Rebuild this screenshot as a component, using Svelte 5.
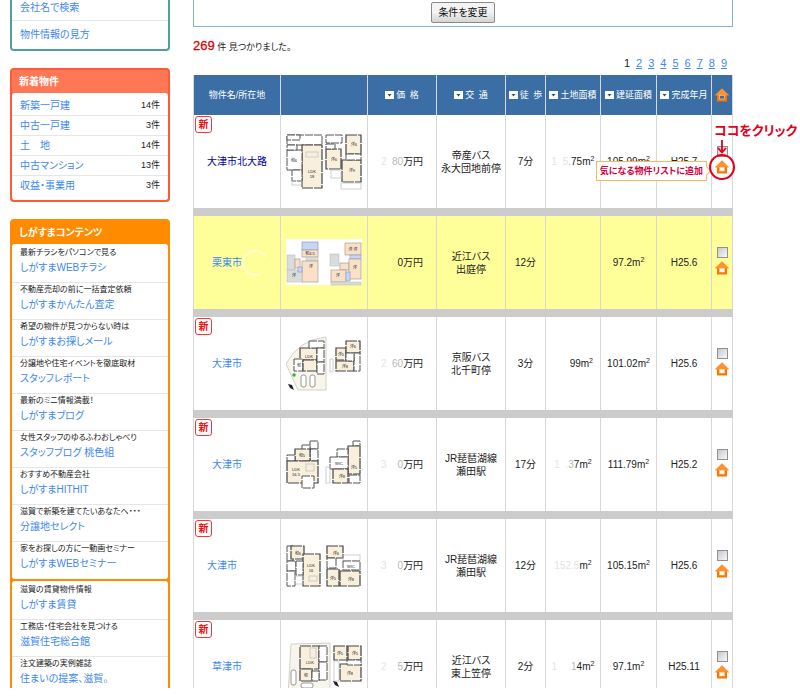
<script lang="ts">
  // ── 間取り図: [x, y, 幅, 高さ, 種類] ─────────────────────────────────────
  type Kind = 'room' | 'plain' | 'light' | 'peach' | 'blue' | 'gray' | 'car'
  type Shape = [number, number, number, number, Kind]

  interface Plan {
    site?: string
    paper?: boolean
    shapes: Shape[]
    labels: [number, number, string][]
    compass?: [number, number]
    tree?: [number, number]
  }

  interface Estate {
    id: number
    isNew: boolean
    name: string
    visited?: boolean
    smudge?: boolean
    price: [string, string, string]
    access: [string, string]
    walk: string
    land: [string, string, string]
    floor: string
    built: string
    plan: Plan
  }

  const searchLinks = ['会社名で検索', '物件情報の見方']

  const newItems = [
    { label: '新築一戸建', count: 14 },
    { label: '中古一戸建', count: 3 },
    { label: '土　地', count: 14 },
    { label: '中古マンション', count: 13 },
    { label: '収益・事業用', count: 3 },
  ]

  const contentGroups = [
    [
      { note: '最新チラシをパソコンで見る', label: 'しがすまWEBチラシ' },
      { note: '不動産売却の前に一括査定依頼', label: 'しがすまかんたん査定' },
      { note: '希望の物件が見つからない時は', label: 'しがすまお探しメール' },
      { note: '分譲地や住宅イベントを徹底取材', label: 'スタッフレポート' },
      { note: '最新のミニ情報満載！', label: 'しがすまブログ' },
      { note: '女性スタッフのゆるふわおしゃべり', label: 'スタッフブログ 桃色組' },
      { note: 'おすすめ不動産会社', label: 'しがすまHITHIT' },
      { note: '滋賀で新築を建てたいあなたへ・・・', label: '分譲地セレクト' },
      { note: '家をお探しの方に一動画セミナー', label: 'しがすまWEBセミナー' },
    ],
    [
      { note: '滋賀の賃貸物件情報', label: 'しがすま賃貸' },
      { note: '工務店・住宅会社を見つける', label: '滋賀住宅総合館' },
      { note: '注文建築の実例雑誌', label: '住まいの提案、滋賀。' },
    ],
  ]

  const sortHeads = ['価\u2002格', '交\u2002通', '徒\u2002歩', '土地面積', '建延面積', '完成年月']
  const colWidths = [88, 87, 69, 69, 40, 55, 56, 55, 21]
  const pages = [2, 3, 4, 5, 6, 7, 8, 9]

  const estates: Estate[] = [
    {
      id: 1, isNew: true, name: '大津市北大路', visited: true,
      price: ['2\u2007', '80', '万円'], access: ['帝産バス', '永大団地前停'], walk: '7分',
      land: ['1\u20075', '.', '75'], floor: '105.99', built: 'H25.7',
      plan: {
        shapes: [
          [1, 1, 35, 10, 'plain'], [1, 1, 13, 5, 'plain'], [16, 11, 20, 43, 'room'], [1, 16, 15, 20, 'plain'],
          [1, 11, 10, 5, 'plain'], [20, 18, 12, 5, 'light'], [6, 36, 10, 11, 'plain'], [6, 47, 10, 4, 'light'],
          [40, 1, 16, 8, 'plain'], [60, 1, 15, 19, 'room'], [40, 15, 15, 20, 'room'], [40, 10, 9, 5, 'plain'],
          [56, 26, 19, 22, 'room'], [60, 20, 15, 6, 'plain'], [45, 36, 10, 8, 'light'], [55, 49, 20, 6, 'light'],
        ],
        labels: [[8, 28, '和6'], [26, 39, 'LDK'], [26, 44, '18'], [68, 12, '洋6'], [48, 27, '洋6'], [66, 38, '洋9']],
      },
    },
    {
      id: 2, isNew: false, name: '栗東市', smudge: true,
      price: ['', '', '\u2007\u2007\u20070万円'], access: ['近江バス', '出庭停'], walk: '12分',
      land: ['', '', ''], floor: '97.2', built: 'H25.6',
      plan: {
        paper: true,
        shapes: [
          [16, 7, 16, 8, 'blue'], [16, 15, 16, 7, 'peach'], [20, 22, 12, 4, 'gray'], [16, 26, 16, 21, 'peach'],
          [1, 20, 8, 15, 'gray'], [9, 24, 5, 9, 'peach'], [1, 35, 15, 12, 'gray'], [12, 32, 4, 5, 'blue'],
          [59, 8, 16, 12, 'peach'], [64, 20, 11, 4, 'blue'], [44, 19, 9, 12, 'gray'], [54, 28, 9, 7, 'peach'],
          [45, 35, 15, 12, 'peach'], [63, 24, 12, 20, 'peach'], [60, 37, 4, 9, 'blue'], [45, 47, 30, 3, 'gray'],
        ],
        labels: [[24, 20, '和4.5'], [25, 33, '洋'], [8, 42, '洋'], [67, 16, '洋 洋'], [52, 42, '洋'], [69, 34, '洋']],
      },
    },
    {
      id: 3, isNew: true, name: '大津市　　',
      price: ['2\u2007', '60', '万円'], access: ['京阪バス', '北千町停'], walk: '3分',
      land: ['\u2007\u2007\u2007', '', '99'], floor: '101.02', built: 'H25.6',
      plan: {
        site: 'M40 1 Q12 4 0 28 L12 54 H40 Z',
        shapes: [
          [14, 12, 17, 12, 'room'], [23, 5, 15, 7, 'plain'], [8, 23, 9, 12, 'plain'], [17, 24, 14, 11, 'room'],
          [31, 12, 7, 14, 'plain'], [31, 26, 7, 12, 'plain'], [15, 39, 5, 12, 'car'], [24, 39, 5, 12, 'car'],
          [50, 12, 10, 12, 'room'], [60, 5, 14, 12, 'room'], [50, 25, 18, 10, 'room'], [68, 17, 6, 18, 'plain'],
          [60, 17, 8, 8, 'plain'], [44, 23, 3, 13, 'light'],
        ],
        labels: [[23, 22, 'LDK'], [13, 31, '和'], [55, 20, '洋5'], [67, 12, '洋6'], [59, 32, '洋8']],
        compass: [5, 51], tree: [8, 39],
      },
    },
    {
      id: 4, isNew: true, name: '大津市　　',
      price: ['3\u2007', '\u20070', '万円'], access: ['JR琵琶湖線', '瀬田駅'], walk: '17分',
      land: ['1\u2007.', '3', '7'], floor: '111.79', built: 'H25.2',
      plan: {
        shapes: [
          [24, 4, 8, 8, 'plain'], [24, 12, 8, 12, 'plain'], [16, 8, 8, 5, 'plain'], [9, 12, 15, 12, 'room'],
          [1, 18, 8, 6, 'plain'], [1, 24, 31, 22, 'room'], [20, 27, 8, 7, 'light'], [16, 39, 12, 12, 'plain'],
          [67, 4, 7, 5, 'plain'], [62, 9, 12, 28, 'room'], [51, 12, 11, 8, 'plain'], [44, 20, 18, 12, 'plain'],
          [47, 32, 15, 14, 'room'], [63, 38, 11, 8, 'plain'], [40, 30, 4, 16, 'light'],
        ],
        labels: [[16, 20, '和5'], [10, 34, 'LDK'], [10, 39, '16.5'], [56, 41, '洋8'], [53, 28, 'WIC'], [68, 32, '洋5']],
      },
    },
    {
      id: 5, isNew: true, name: '大津市　　　',
      price: ['3\u2007', '\u20070', '万円'], access: ['JR琵琶湖線', '瀬田駅'], walk: '12分',
      land: ['152.5', '', ''], floor: '105.15', built: 'H25.6',
      plan: {
        shapes: [
          [1, 8, 6, 15, 'plain'], [5, 8, 13, 13, 'room'], [17, 16, 17, 32, 'room'], [1, 23, 9, 10, 'plain'],
          [10, 23, 7, 14, 'plain'], [1, 33, 8, 15, 'plain'], [9, 38, 8, 8, 'light'], [23, 38, 8, 5, 'light'],
          [41, 8, 16, 12, 'room'], [57, 17, 17, 6, 'light'], [57, 23, 17, 9, 'plain'], [41, 20, 9, 10, 'plain'],
          [41, 31, 12, 17, 'room'], [54, 33, 20, 15, 'room'],
        ],
        labels: [[12, 17, '和6'], [25, 29, 'LDK'], [25, 34, '16'], [50, 17, '洋6'], [65, 30, 'WIC'], [47, 42, '洋5'], [65, 43, '洋8']],
      },
    },
    {
      id: 6, isNew: true, name: '草津市　　',
      price: ['2\u2007', '\u20075', '万円'], access: ['近江バス', '東上笠停'], walk: '2分',
      land: ['1\u2007\u2007.', '1', '4'], floor: '97.1', built: 'H25.11',
      plan: {
        site: 'M5 5 L44 4 V56 H2 Z',
        shapes: [
          [14, 7, 19, 23, 'room'], [24, 9, 6, 10, 'light'], [33, 7, 8, 16, 'plain'], [33, 23, 8, 18, 'plain'],
          [14, 30, 12, 12, 'room'], [26, 32, 7, 10, 'plain'], [5, 31, 5, 15, 'car'], [15, 44, 12, 5, 'car'],
          [48, 7, 13, 14, 'room'], [62, 7, 13, 14, 'room'], [54, 25, 21, 17, 'room'], [61, 21, 14, 5, 'plain'],
          [48, 22, 5, 20, 'light'],
        ],
        labels: [[24, 25, 'LDK'], [20, 38, '和'], [54, 16, '洋5'], [69, 16, '洋5'], [64, 36, '洋8']],
        compass: [50, 45],
      },
    },
  ]

  let checked = $state<Record<number, boolean>>({})
</script>

{#snippet house(big: boolean)}
  <svg class="house" class:big viewBox="0 0 14 14" aria-hidden="true">
    <path d="M7 0.5 L14 7.2 H12 V13.5 H2 V7.2 H0 Z" fill="#ff7400" />
    <path d="M7 0.5 L14 7.2 H0 Z" fill="#ff9230" />
    <rect x="4.6" y="7.4" width="4.8" height="3.6" fill={big ? '#3b6ea5' : '#fff'} stroke="#ffd9a8" stroke-width="0.6" />
  </svg>
{/snippet}

{#snippet floorPlan(plan: Plan)}
  <svg class="plan" viewBox="0 0 76 56" role="img" aria-label="間取り図">
    {#if plan.paper}
      <rect x="0" y="4" width="76" height="46" fill="#fff" />
    {/if}
    {#if plan.site}
      <path d={plan.site} fill="#f8f5ec" stroke="#c4c0b4" stroke-width="0.7" />
    {/if}
    {#each plan.shapes as [x, y, w, h, kind]}
      <rect class={kind} {x} {y} width={w} height={h} rx={kind === 'car' ? 2 : 0} />
    {/each}
    {#each plan.labels as [x, y, text]}
      <text {x} {y}>{text}</text>
    {/each}
    {#if plan.tree}
      <circle cx={plan.tree[0]} cy={plan.tree[1]} r="1.8" fill="#35b04a" />
    {/if}
    {#if plan.compass}
      <path d="M-3 -3 L1 -2 L3 3 L-1 1 Z" transform="translate({plan.compass[0]} {plan.compass[1]})" fill="#222" />
    {/if}
  </svg>
{/snippet}

<div class="page">
  <aside>
    <section class="box search">
      <ul>
        {#each searchLinks as link}
          <li><a href="#search">{link}</a></li>
        {/each}
      </ul>
    </section>

    <section class="box arrivals">
      <h2>新着物件</h2>
      <ul>
        {#each newItems as item}
          <li><a href="#new">{item.label}</a><span>{item.count}件</span></li>
        {/each}
      </ul>
    </section>

    <section class="box contents">
      <h2>しがすまコンテンツ</h2>
      {#each contentGroups as group}
        <ul>
          {#each group as item}
            <li>
              <p>{item.note}</p>
              <a href="#contents">{item.label}</a>
            </li>
          {/each}
        </ul>
      {/each}
    </section>
  </aside>

  <main>
    <div class="conditions">
      <button type="button">条件を変更</button>
    </div>

    <p class="result"><strong>269</strong> 件 見つかりました。</p>

    <nav class="pager">
      <span>1</span>
      {#each pages as page}
        <a href="#page{page}">{page}</a>
      {/each}
    </nav>

    <table>
      <colgroup>
        {#each colWidths as w}
          <col style="width: {w}px" />
        {/each}
      </colgroup>
      <thead>
        <tr>
          <th>物件名/所在地</th>
          <th></th>
          {#each sortHeads as head}
            <th>
              <button type="button" class="sort">
                <svg viewBox="0 0 9 8" aria-hidden="true">
                  <rect width="9" height="8" fill="#fff" />
                  <path d="M2.5 3 H6.5 L4.5 5.5 Z" fill="#1d4f86" />
                </svg>{head}
              </button>
            </th>
          {/each}
          <th>{@render house(true)}</th>
        </tr>
      </thead>
      <tbody>
        {#each estates as estate, i}
          {#if i > 0}
            <tr class="gap"><td colspan="9"></td></tr>
          {/if}
          <tr class:marked={!estate.isNew}>
            <td class="name">
              {#if estate.isNew}<span class="new">新</span>{/if}
              <a href="#estate{estate.id}" class:visited={estate.visited}>{estate.name}</a>{#if estate.smudge}<svg class="smudge" viewBox="0 0 26 26" aria-hidden="true">
                <circle cx="13" cy="13" r="12" fill="none" stroke="#ffffd2" stroke-width="2" stroke-dasharray="56 20" transform="rotate(60 13 13)" />
              </svg>{/if}
            </td>
            <td>{@render floorPlan(estate.plan)}</td>
            <td><span class="faint">{estate.price[0]}</span><span class="dim">{estate.price[1]}</span>{estate.price[2]}</td>
            <td>{estate.access[0]}<br />{estate.access[1]}</td>
            <td>{estate.walk}</td>
            <td>
              {#if estate.land.join('')}
                <span class="faint">{estate.land[0]}</span><span class="dim">{estate.land[1]}</span>{estate.land[2]}m<sup>2</sup>
              {/if}
            </td>
            <td>{estate.floor}m<sup>2</sup></td>
            <td>{estate.built}</td>
            <td class="pick">
              <label>
                <input type="checkbox" bind:checked={checked[estate.id]} aria-label="{estate.name.trim()}を選択" />
                {@render house(false)}
              </label>
              {#if i === 0}
                <div class="guide">
                  <strong>ココをクリック</strong>
                  <svg class="arrow" viewBox="0 0 10 14" aria-hidden="true">
                    <path d="M5 0 V12 M1 8 L5 12.5 L9 8" fill="none" stroke="#e2001a" stroke-width="1.8" />
                  </svg>
                  <span class="ring"></span>
                </div>
                <div class="tip">気になる物件リストに追加</div>
              {/if}
            </td>
          </tr>
        {/each}
      </tbody>
    </table>
  </main>
</div>

<style>
  :global(body) { margin: 0; background: #fff; }

  .page {
    display: flex; align-items: flex-start; gap: 23px; box-sizing: border-box;
    height: calc(100vh - 10px); overflow: hidden; padding: 0 67px 0 10px;
    font: 10px/13px "Liberation Sans", "Noto Sans CJK JP", sans-serif;
    font-feature-settings: "palt"; color: #222;
  }
  a { color: #4088f0; text-decoration: none; }
  ul { list-style: none; margin: 0; padding: 0; }
  p, h2 { margin: 0; }

  /* ── サイドバー ── */
  aside { flex: 0 0 160px; display: flex; flex-direction: column; gap: 17px; }
  .box { border: 2px solid; border-radius: 4px; }
  .box h2 { padding: 0 7px; font-size: 10px; line-height: 23px; color: #fff; }
  .box ul { background: #fff; border-radius: 3px; }
  .box li { border-bottom: 1px solid #e6e6e6; padding: 0 8px; }
  .box li:last-child { border-bottom: 0; }

  .search { border-color: #4f9f9b; border-top: 0; border-radius: 0 0 4px 4px; }
  .search li { line-height: 27px; }
  .search li:first-child { line-height: 13px; padding-bottom: 6px; }
  .search ul { padding: 1px 0; }

  .arrivals { border-color: #ff5a36; background: #ff7755; }
  .arrivals ul { padding: 3px 0 5px; }
  .arrivals li { display: flex; justify-content: space-between; line-height: 19px; }
  .arrivals span { font-size: 9px; }

  .contents { border-color: #ff8c00; background: #ff8c00; }
  .contents ul { padding: 2px 0 1px; }
  .contents ul + ul { margin-top: 2px; }
  .contents li { padding-bottom: 6px; white-space: nowrap; }
  .contents p { font-size: 8px; line-height: 14px; }
  .contents a { display: block; line-height: 16px; }

  /* ── 検索結果 ── */
  main { flex: 1; min-width: 0; }
  .conditions {
    display: flex; justify-content: center; padding: 2px 0 3px;
    border: 1px solid #86aed6; border-top: 0;
  }
  .conditions button {
    width: 64px; height: 21px; padding: 0; border: 1px solid #8a8a8a; border-radius: 2px;
    background: linear-gradient(#f4f4f4 45%, #d4d4d4); font: inherit; color: #111;
  }
  .result { margin-top: 10px; font-size: 9px; line-height: 18px; }
  .result strong { font-size: 13px; font-weight: 400; color: #d00; -webkit-text-stroke: 0.3px #d00; }
  .pager {
    display: flex; justify-content: flex-end; gap: 6px; margin-bottom: 4px;
    padding-right: 6px; font-size: 11px; line-height: 15px;
  }
  .pager a { text-decoration: underline; }

  table { width: 100%; table-layout: fixed; border-collapse: separate; border-spacing: 0; }
  th, td { box-sizing: border-box; padding: 0; border-right: 1px solid #d8d8d8; text-align: center; vertical-align: middle; white-space: nowrap; }
  th:first-child, td:first-child { border-left: 1px solid #d8d8d8; }
  th { height: 40px; background: #3a6ea5; font-size: 9px; font-weight: 400; color: #fff; }
  td { height: 93px; }
  .gap td { height: 8px; background: #ccc; border-color: #ccc; }
  .marked td { background: #ffff99; }

  .sort {
    display: flex; align-items: center; justify-content: center; gap: 2px; width: 100%;
    padding: 0; border: 0; background: none; font: inherit; color: inherit; white-space: nowrap;
    font-feature-settings: inherit;
  }
  .sort svg { flex: none; width: 9px; height: 8px; }

  .name { position: relative; }
  .name a { white-space: pre; }
  a.visited { color: #000099; }
  .new {
    position: absolute; top: 1px; left: 1px; box-sizing: border-box; width: 17px; height: 17px;
    border: 1px solid #f33; border-radius: 3px; line-height: 15px; font-weight: 700; color: #e11;
  }
  .smudge { width: 26px; height: 26px; margin-right: -6px; vertical-align: middle; }
  .faint { color: #e4e4e4; }
  .dim { color: #b8b8b8; }
  sup { font-size: 7px; line-height: 0; vertical-align: 4px; }

  .plan { display: block; width: 76px; height: 56px; margin: 0 auto; }
  .plan rect { stroke-width: 1; }
  .plan text { font-size: 4px; text-anchor: middle; fill: #222; }
  .plan .room { fill: #f8f0dc; stroke: #444; stroke-width: 1.2; stroke-dasharray: 11 1; }
  .plan .plain { fill: #fff; stroke: #555; stroke-dasharray: 8 1; }
  .plan .light { fill: none; stroke: #bbb; stroke-width: 0.7; }
  .plan .peach { fill: #fbe0c8; stroke: #a89c9c; stroke-width: 0.7; }
  .plan .blue { fill: #c8d6f6; stroke: #8f9cc4; stroke-width: 0.7; }
  .plan .gray { fill: #d9dcd8; stroke: #b4b8b4; stroke-width: 0.5; }
  .plan .car { fill: #fff; stroke: #999; }

  .pick { position: relative; }
  .pick label { display: flex; flex-direction: column; align-items: center; gap: 3px; padding-bottom: 3px; }
  .pick input {
    appearance: none; width: 11px; height: 11px; margin: 0;
    border: 1px solid #909090; background: linear-gradient(135deg, #c4c8d0, #f8f8f8);
  }
  .pick input:checked { background: #4088f0; }
  .house { display: block; width: 14px; height: 14px; margin: 0 auto; }

  .guide {
    position: absolute; z-index: 2; top: 7px; left: 50%; display: flex; flex-direction: column;
    align-items: flex-start; margin-left: -8px; color: #e2001a;
  }
  .guide strong { font-size: 13px; line-height: 18px; }
  .arrow { width: 10px; height: 14px; margin-left: 3px; }
  .ring { box-sizing: border-box; width: 26px; height: 26px; margin-left: -5px; border: 2px solid #e2001a; border-radius: 50%; }
  .tip {
    position: absolute; z-index: 1; top: 46px; right: 25px; padding: 0 3px;
    border: 1px solid #f4b95c; background: #fff; font-size: 9px; line-height: 18px; font-weight: 700; color: #d0003c;
  }
  .tip::after {
    content: ""; position: absolute; top: 6px; right: -4px; width: 5px; height: 5px;
    border: solid #f4b95c; border-width: 1px 1px 0 0; background: #fff; transform: rotate(45deg);
  }
</style>
